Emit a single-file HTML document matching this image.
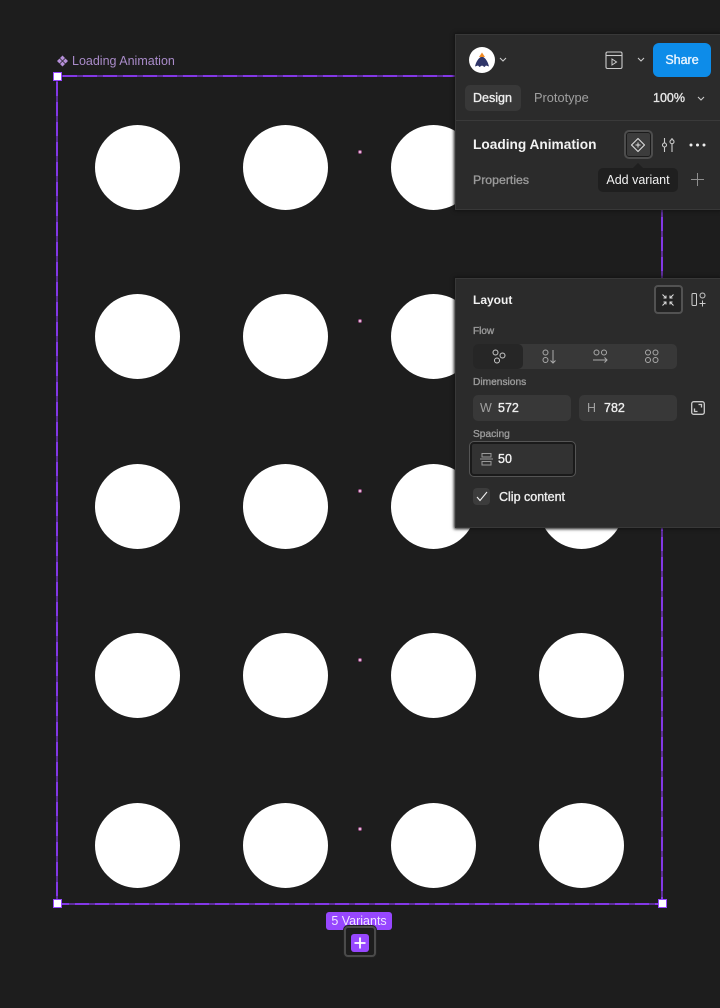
<!DOCTYPE html>
<html>
<head>
<meta charset="utf-8">
<style>
html,body{margin:0;padding:0;background:#1d1d1d}
body{width:720px;height:1008px;position:relative;overflow:hidden;font-family:"Liberation Sans",sans-serif;color:#fff}
.c{position:absolute;width:85px;height:85px;border-radius:50%;background:#fff}
.t{position:absolute;white-space:nowrap;line-height:16px}
.m{-webkit-text-stroke:.35px currentColor}
.p{position:absolute;left:456px;width:264px;background:#2b2b2b;box-shadow:0 0 0 1px #383838,0 0 3px 2px #141414}
.a{position:absolute}
.dot{position:absolute;width:2px;height:2px;background:#f7dff0;border:1px solid #9c4f88;border-radius:50%;left:358px}
.h{position:absolute;width:7px;height:7px;background:#fff;border:1px solid #9747ff}
svg{position:absolute;overflow:visible}
</style>
</head>
<body>
<div class="c" style="left:95px;top:125px"></div><div class="c" style="left:243px;top:125px"></div><div class="c" style="left:391px;top:125px"></div>
<div class="c" style="left:95px;top:294px"></div><div class="c" style="left:243px;top:294px"></div><div class="c" style="left:391px;top:294px"></div>
<div class="c" style="left:95px;top:464px"></div><div class="c" style="left:243px;top:464px"></div><div class="c" style="left:391px;top:464px"></div><div class="c" style="left:539px;top:464px"></div>
<div class="c" style="left:95px;top:633px"></div><div class="c" style="left:243px;top:633px"></div><div class="c" style="left:391px;top:633px"></div><div class="c" style="left:539px;top:633px"></div>
<div class="c" style="left:95px;top:803px"></div><div class="c" style="left:243px;top:803px"></div><div class="c" style="left:391px;top:803px"></div><div class="c" style="left:539px;top:803px"></div>

<div class="dot" style="top:150px"></div><div class="dot" style="top:319px"></div><div class="dot" style="top:489px"></div><div class="dot" style="top:658px"></div><div class="dot" style="top:827px"></div>

<svg style="left:0;top:0" width="720" height="1008">
<rect x="57" y="76" width="605" height="828" fill="none" stroke="#8338e6" stroke-width="2"/>
<rect x="57" y="76" width="605" height="828" fill="none" stroke="#1d1d1d" stroke-width="1" stroke-dasharray="6 14" opacity=".75"/>
<path d="M62.500 55.500l2.500 2.500-2.500 2.500-2.500-2.500zM62.500 61.500l2.500 2.500-2.500 2.500-2.500-2.500zM59.500 58.500l2.500 2.500-2.500 2.500-2.500-2.500zM65.500 58.500l2.500 2.500-2.500 2.500-2.500-2.500z" fill="#b58fd8"/>
</svg>
<div class="t" style="left:72px;top:53px;font-size:12.500px;color:#a98bc9">Loading Animation</div>
<div class="h" style="left:53px;top:72px"></div>
<div class="h" style="left:53px;top:899px"></div>
<div class="h" style="left:658px;top:899px"></div>

<div class="a" style="left:326px;top:912px;width:66px;height:18px;background:#9747ff;border-radius:3px"></div>
<div class="t" style="left:326px;top:913px;width:66px;text-align:center;font-size:12.500px;color:#f0e4ff">5 Variants</div>
<div class="a" style="left:344px;top:926px;width:28px;height:27px;background:#1d1d1d;border:2px solid #4a4a4a;border-radius:4px;box-shadow:0 0 0 1px #222"></div>
<div class="a" style="left:351px;top:934px;width:18px;height:18px;background:#9747ff;border-radius:3px"></div>
<svg style="left:351px;top:934px" width="18" height="18"><path d="M9 3.500v11M3.500 9h11" stroke="#fff" stroke-width="1.800"/></svg>

<!-- Panel 1 -->
<div class="p" style="top:35px;height:174px"></div>
<div class="a" style="left:456px;top:120px;width:264px;height:1px;background:#3a3a3a"></div>
<div class="a" style="left:469px;top:47px;width:26px;height:26px;border-radius:50%;background:#fff"></div>
<svg style="left:469px;top:47px" width="26" height="26"><path d="M13 9.500C9.500 10.500 7 15 6 19.500L9 18.500 10.500 20 13 18.500 15.500 20 17 18.500 20 19.500C19 15 16.500 10.500 13 9.500Z" fill="#2f3568"/><path d="M13 5.500l3 4.500h-6z" fill="#f08a24"/></svg>
<svg style="left:499px;top:57px" width="8" height="6"><path d="M1 1l3 3 3-3" fill="none" stroke="#ccc" stroke-width="1.100"/></svg>
<svg style="left:605px;top:51px" width="18" height="18"><rect x="1" y="1" width="16" height="16.500" rx="1.500" fill="none" stroke="#ccc" stroke-width="1.100"/><path d="M1 4.500h16" stroke="#ccc" stroke-width="1.100"/><path d="M7 8l4.500 3L7 14z" fill="none" stroke="#ccc" stroke-width="1"/></svg>
<svg style="left:637px;top:57px" width="8" height="6"><path d="M1 1l3 3 3-3" fill="none" stroke="#ccc" stroke-width="1.100"/></svg>
<div class="a" style="left:653px;top:43px;width:58px;height:34px;background:#0d8ce9;border-radius:6px"></div>
<div class="t m" style="left:653px;top:52px;width:58px;text-align:center;font-size:12.500px;color:#eaf5ff">Share</div>
<div class="a" style="left:465px;top:85px;width:56px;height:26px;background:#383838;border-radius:5px"></div>
<div class="t m" style="left:473px;top:90px;font-size:12.500px;color:#eee">Design</div>
<div class="t" style="left:534px;top:90px;font-size:12.800px;color:#a0a0a0">Prototype</div>
<div class="t m" style="left:653px;top:90px;font-size:12.500px;color:#e6e6e6">100%</div>
<svg style="left:697px;top:96px" width="8" height="6"><path d="M1 1l3 3 3-3" fill="none" stroke="#ccc" stroke-width="1.100"/></svg>
<div class="t" style="left:473px;top:137px;font-size:13.700px;font-weight:bold;color:#f2f2f2">Loading Animation</div>
<div class="a" style="left:624px;top:130px;width:25px;height:25px;background:#3c3c3c;border:2px solid #4d4d4d;border-radius:5px;box-shadow:0 0 0 1px #1b1b1b inset"></div>
<svg style="left:630px;top:137px" width="16" height="16"><path d="M8 1.500L14.500 8 8 14.500 1.500 8z" fill="none" stroke="#ddd" stroke-width="1.100" stroke-linejoin="round"/><path d="M8 5.500v5M5.500 8h5" stroke="#ddd" stroke-width="1"/></svg>
<svg style="left:661px;top:137px" width="15" height="16"><path d="M3.500 1v5M3.500 10v5M11 1v1.500M11 7v8" stroke="#ccc" stroke-width="1.100"/><circle cx="3.500" cy="8" r="2" fill="none" stroke="#ccc" stroke-width="1.100"/><circle cx="11" cy="4.700" r="2" fill="none" stroke="#ccc" stroke-width="1.100"/></svg>
<svg style="left:689px;top:143px" width="18" height="4"><circle cx="2" cy="2" r="1.500" fill="#eee"/><circle cx="8.500" cy="2" r="1.500" fill="#eee"/><circle cx="15" cy="2" r="1.500" fill="#eee"/></svg>
<div class="t m" style="left:473px;top:172px;font-size:12.300px;color:#9a9a9a">Properties</div>
<div class="a" style="left:598px;top:168px;width:80px;height:24px;background:#1f1f1f;border-radius:5px"></div>
<div class="a" style="left:633px;top:163px;width:0;height:0;border-left:5px solid transparent;border-right:5px solid transparent;border-bottom:5px solid #1f1f1f"></div>
<div class="t" style="left:598px;top:172px;width:80px;text-align:center;font-size:12.500px;color:#f2f2f2">Add variant</div>
<svg style="left:691px;top:173px" width="13" height="13"><path d="M6.500 0v13M0 6.500h13" stroke="#8f8f8f" stroke-width="1"/></svg>

<!-- Panel 2 -->
<div class="p" style="top:279px;height:248px"></div>
<div class="t" style="left:473px;top:292px;font-size:12px;font-weight:bold;color:#f2f2f2">Layout</div>
<div class="a" style="left:654px;top:285px;width:25px;height:25px;background:#232323;border:2px solid #525252;border-radius:4px"></div>
<svg style="left:661px;top:292.500px" width="14" height="14" fill="none" stroke="#ddd" stroke-width="1"><path d="M1.500 1.500l3 3M5 2.500V5H2.500M12.500 1.500l-3 3M9 2.500V5h2.500M1.500 12.500l3-3M5 11.500V9H2.500M12.500 12.500l-3-3M9 11.500V9h2.500"/></svg>
<svg style="left:691px;top:292px" width="16" height="16" fill="none" stroke="#ccc" stroke-width="1"><rect x="1" y="1.500" width="4.500" height="12" rx="1"/><circle cx="11.500" cy="3.500" r="2.500"/><path d="M11.500 8.500v6M8.500 11.500h6"/></svg>
<div class="t m" style="left:473px;top:324px;font-size:10px;color:#9a9a9a">Flow</div>
<div class="a" style="left:473px;top:344px;width:204px;height:25px;background:#383838;border-radius:5px"></div>
<div class="a" style="left:473px;top:344px;width:50px;height:25px;background:#262626;border-radius:5px"></div>
<svg style="left:491px;top:349px" width="16" height="16" fill="none" stroke="#ccc" stroke-width="1"><circle cx="4.500" cy="3.500" r="2.500"/><circle cx="11.500" cy="6.500" r="2.500"/><circle cx="6" cy="11.500" r="2.500"/></svg>
<svg style="left:542px;top:349px" width="16" height="16" fill="none" stroke="#aaa" stroke-width="1"><circle cx="3.500" cy="3.500" r="2.500"/><circle cx="3.500" cy="11" r="2.500"/><path d="M11 1v13M8.500 11.500l2.500 2.500 2.500-2.500"/></svg>
<svg style="left:592px;top:349px" width="18" height="16" fill="none" stroke="#aaa" stroke-width="1"><circle cx="4.500" cy="3.500" r="2.500"/><circle cx="12" cy="3.500" r="2.500"/><path d="M1 11h14M12.500 8.500l2.500 2.500-2.500 2.500"/></svg>
<svg style="left:644px;top:349px" width="16" height="16" fill="none" stroke="#aaa" stroke-width="1"><circle cx="4" cy="3.500" r="2.500"/><circle cx="11.500" cy="3.500" r="2.500"/><circle cx="4" cy="11" r="2.500"/><circle cx="11.500" cy="11" r="2.500"/></svg>
<div class="t m" style="left:473px;top:375px;font-size:10.200px;color:#9a9a9a">Dimensions</div>
<div class="a" style="left:473px;top:395px;width:98px;height:26px;background:#383838;border-radius:5px"></div>
<div class="a" style="left:579px;top:395px;width:98px;height:26px;background:#383838;border-radius:5px"></div>
<div class="t" style="left:480px;top:400px;font-size:12.500px;color:#a0a0a0">W</div>
<div class="t m" style="left:498px;top:400px;font-size:12.500px;color:#eee">572</div>
<div class="t" style="left:587px;top:400px;font-size:12.500px;color:#a0a0a0">H</div>
<div class="t m" style="left:604px;top:400px;font-size:12.500px;color:#eee">782</div>
<svg style="left:691px;top:401px" width="14" height="14" fill="none" stroke="#ccc" stroke-width="1.300"><rect x=".7" y=".7" width="12.600" height="12.600" rx="2"/><path d="M7.500 3.500h3v3M3.500 7.500v3h3" /></svg>
<div class="t m" style="left:473px;top:427px;font-size:10.200px;color:#9a9a9a">Spacing</div>
<div class="a" style="left:470px;top:442px;width:101px;height:30px;background:#323232;border:2px solid #1a1a1a;border-radius:4px;box-shadow:0 0 0 1px #555"></div>
<svg style="left:480px;top:452px" width="13" height="15" fill="none" stroke="#999" stroke-width="1"><path d="M0 7h13"/><rect x="2" y="1.500" width="9" height="3.500"/><rect x="2" y="9.500" width="9" height="3.500"/></svg>
<div class="t m" style="left:498px;top:451px;font-size:12.500px;color:#f2f2f2">50</div>
<div class="a" style="left:473px;top:488px;width:17px;height:17px;background:#3c3c3c;border-radius:4px"></div>
<svg style="left:476px;top:491px" width="12" height="11" fill="none" stroke="#f0f0f0" stroke-width="1.100"><path d="M1 6l3 3.500L11 1"/></svg>
<div class="t m" style="left:499px;top:489px;font-size:12.500px;color:#eee">Clip content</div>
</body>
</html>
